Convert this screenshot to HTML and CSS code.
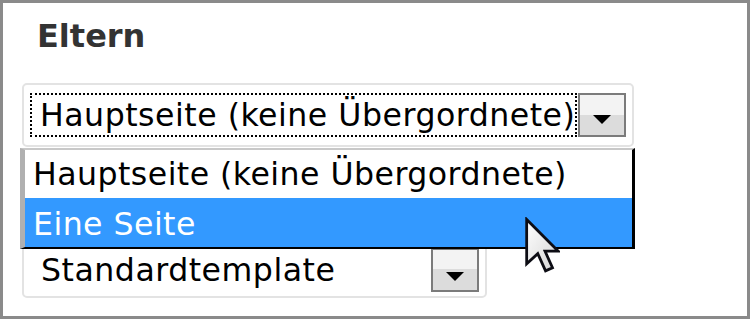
FILE: index.html
```html
<!DOCTYPE html>
<html lang="de">
<head>
<meta charset="utf-8">
<title>Eltern</title>
<link rel="stylesheet" href="styles.css">
</head>
<body>
<div class="frame">
  <h2 class="title">Eltern</h2>
  <div class="select select-parent">
    <div class="value focused">Hauptseite (keine Übergordnete)</div>
    <div class="btn"><span class="arrow"></span></div>
  </div>
  <div class="select select-template">
    <div class="value">Standardtemplate</div>
    <div class="btn btn-low"><span class="arrow"></span></div>
  </div>
  <ul class="list">
    <li class="option">Hauptseite (keine Übergordnete)</li>
    <li class="option option-active">Eine Seite</li>
  </ul>
  <svg class="cursor" viewBox="-0.6 -0.6 12.6 19.6" width="35" height="56">
    <defs>
      <linearGradient id="cg" x1="0" y1="0" x2="1" y2="1">
        <stop offset="0" stop-color="#ffffff"/>
        <stop offset="1" stop-color="#d4d4d4"/>
      </linearGradient>
    </defs>
    <path d="M0 0 V16 L4 12.3 L6.8 18.5 L9.3 17.4 L6.6 11.4 H11.3 Z" fill="url(#cg)" stroke="#0d0d14" stroke-width="1" stroke-linejoin="miter"/>
  </svg>
</div>
</body>
</html>
```
FILE: styles.css
```css
html, body {
  margin: 0;
  padding: 0;
  background: #fff;
}

.frame {
  position: relative;
  width: 750px;
  height: 319px;
  box-sizing: border-box;
  border: 3px solid #8a8a8a;
  background: #fff;
  padding-left: 19px;
  font-family: "DejaVu Sans", Verdana, sans-serif;
  overflow: hidden;
}

.title {
  margin: 15px 0 0 15px;
  font-size: 32px;
  line-height: 37px;
  font-weight: bold;
  color: #333;
}

.select {
  display: flex;
  box-sizing: border-box;
  height: 64px;
  border: 2px solid #e3e3e3;
  border-radius: 5px;
  background: #fff;
}

.select-parent {
  width: 612px;
  margin-top: 28px;
  padding: 8px 6px;
}

.select-template {
  width: 465px;
  margin-top: 87px;
  padding: 12px 6px 4px;
}

.value {
  flex: 1;
  margin-right: 1px;
  border: 2px solid transparent;
  padding-left: 9px;
  font-size: 31.6px;
  line-height: 40px;
  letter-spacing: 0.5px;
  color: #000;
  white-space: nowrap;
  overflow: hidden;
}

.value.focused {
  border: 2px dotted #000;
  padding-left: 8px;
}

.btn {
  box-sizing: border-box;
  width: 48px;
  height: 44px;
  border: 2px solid #7b7b7b;
  background: linear-gradient(#f3f3f3 50%, #dcdcdc 50%);
  display: flex;
  justify-content: center;
  align-items: flex-start;
  padding-top: 20px;
}

.btn-low {
  padding-top: 22px;
  background: linear-gradient(#f3f3f3 47%, #dcdcdc 47%);
}

.arrow {
  width: 0;
  height: 0;
  border-left: 9px solid transparent;
  border-right: 9px solid transparent;
  border-top: 9px solid #000;
}

.list {
  position: absolute;
  left: 17px;
  top: 145px;
  width: 615px;
  box-sizing: border-box;
  margin: 0;
  padding: 0;
  list-style: none;
  background: #fff;
  border-top: 2px solid #c8c8c8;
  border-left: 5px solid #b0b0b0;
  border-right: 3px solid #000;
  border-bottom: 2px solid #000;
}

.option {
  height: 48px;
  padding-left: 8px;
  font-size: 31.6px;
  line-height: 48px;
  letter-spacing: 0.45px;
  color: #000;
  white-space: nowrap;
}

.option-active {
  box-sizing: border-box;
  height: 49px;
  padding-top: 4px;
  line-height: 45px;
  background: #3399ff;
  color: #fff;
}

.cursor {
  position: absolute;
  left: 522px;
  top: 214px;
}
```
